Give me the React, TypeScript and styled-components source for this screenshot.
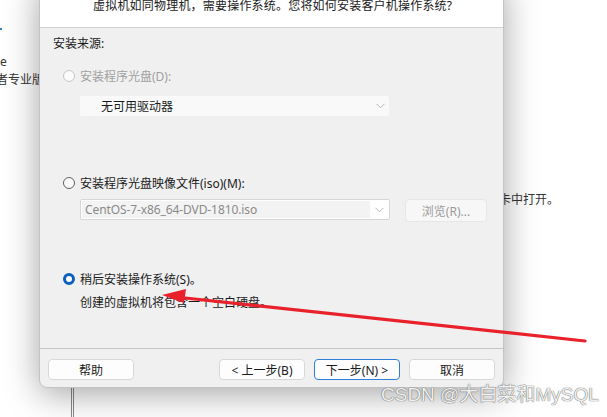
import * as React from 'react';
import styled, { createGlobalStyle } from 'styled-components';

const GlobalStyle = createGlobalStyle`
  html, body {
    margin: 0;
    padding: 0;
    background: #ffffff;
    overflow: hidden;
  }
  body {
    font-family: "Noto Sans", "Noto Sans CJK SC", sans-serif;
    font-size: 12px;
    color: #1a1a1a;
  }
`;

const Screen = styled.div`
  position: relative;
  width: 607px;
  height: 417px;
  overflow: hidden;
  background: #ffffff;
`;

const BackText = styled.div<{ $top: number; $left: number }>`
  position: absolute;
  top: ${(p) => p.$top}px;
  left: ${(p) => p.$left}px;
  font-size: 12px;
  line-height: 16px;
  color: #333;
  white-space: nowrap;
`;

const BackMark = styled.div`
  position: absolute;
  left: 0;
  top: 28px;
  width: 2px;
  height: 2px;
  background: #3a7bd5;
`;

const BackRail = styled.div`
  position: absolute;
  left: 71px;
  top: 380px;
  width: 1px;
  height: 40px;
  border-left: 1px solid #8a8a8a;
  border-right: 1px solid #8a8a8a;
`;

const Dialog = styled.div`
  position: absolute;
  left: 39px;
  top: -20px;
  width: 463px;
  height: 406px;
  border: 1px solid #c4c4c4;
  border-radius: 0 0 8px 8px;
  background: #f0f0f0;
  box-shadow: 0 6px 34px rgba(0, 0, 0, 0.36);
  display: flex;
  flex-direction: column;
  overflow: hidden;
`;

const Header = styled.div`
  height: 47px;
  background: #ffffff;
  border-bottom: 1px solid #d2d2d2;
  padding-left: 53px;
  box-sizing: border-box;
`;

const Question = styled.div`
  padding-top: 17px;
  font-size: 12px;
  line-height: 16px;
  letter-spacing: 0.2px;
`;

const Body = styled.div`
  flex: 1;
  padding: 8px 13px 0;
  display: flex;
  flex-direction: column;
`;

const SectionLabel = styled.div`
  line-height: 16px;
`;

const RadioRow = styled.label<{ $gap: number; $disabled?: boolean }>`
  margin-top: ${(p) => p.$gap}px;
  margin-left: 10px;
  display: flex;
  align-items: center;
  gap: 5px;
  height: 16px;
  color: ${(p) => (p.$disabled ? '#a0a0a0' : '#1a1a1a')};
`;

const RadioDot = styled.span<{ $state: 'disabled' | 'off' | 'on' }>`
  width: 12px;
  height: 12px;
  border-radius: 50%;
  box-sizing: border-box;
  flex: none;
  background: #fbfbfb;
  border: ${(p) =>
    p.$state === 'on'
      ? '3.5px solid #0a5fbf'
      : p.$state === 'off'
      ? '1px solid #5f5f5f'
      : '1px solid #c6c6c6'};
`;

const Indented = styled.div<{ $gap: number }>`
  margin-top: ${(p) => p.$gap}px;
  margin-left: 27px;
  display: flex;
  align-items: flex-start;
  gap: 15px;
`;

const DriveSelect = styled.div`
  width: 309px;
  height: 20px;
  background: #f9f9f9;
  border-radius: 2px;
  display: flex;
  align-items: center;
  justify-content: space-between;
  padding: 0 4px 0 21px;
  box-sizing: border-box;
`;

const IsoSelect = styled.div`
  width: 310px;
  height: 21px;
  background: #ffffff;
  border: 1px solid #d6d6d6;
  border-radius: 2px;
  display: flex;
  align-items: stretch;
  box-sizing: border-box;
`;

const IsoField = styled.div`
  flex: 1;
  background: #f3f3f3;
  margin: 1px 0 1px 1px;
  padding-left: 3px;
  display: flex;
  align-items: center;
  color: #8a8a8a;
  font-size: 12px;
  letter-spacing: -0.1px;
`;

const Caret = styled.div`
  width: 19px;
  display: flex;
  align-items: center;
  justify-content: center;
`;

const BrowseButton = styled.div`
  width: 82px;
  height: 23px;
  box-sizing: border-box;
  background: #f7f7f7;
  border: 1px solid #e6e6e6;
  border-radius: 4px;
  color: #9a9a9a;
  display: flex;
  align-items: center;
  justify-content: center;
`;

const Hint = styled.div<{ $gap: number }>`
  margin-top: ${(p) => p.$gap}px;
  margin-left: 27px;
  line-height: 16px;
`;

const Footer = styled.div`
  height: 39px;
  border-top: 1px solid #c6c6c6;
  display: flex;
  align-items: flex-start;
  padding: 10px 8px 0 8px;
  box-sizing: border-box;
`;

const Button = styled.div<{ $primary?: boolean }>`
  width: 86px;
  height: 21px;
  box-sizing: border-box;
  background: #fdfdfd;
  border: 1px solid ${(p) => (p.$primary ? '#2f7ed8' : '#d8d8d8')};
  border-radius: 4px;
  display: flex;
  align-items: center;
  justify-content: center;
  font-size: 12px;
  & + & {
    margin-left: 9px;
  }
`;

const Spacer = styled.div`
  flex: 1;
`;

const Overlay = styled.svg`
  position: absolute;
  left: 0;
  top: 0;
  pointer-events: none;
`;

const Watermark = styled.div`
  position: absolute;
  left: 381px;
  top: 383px;
  font-family: "Liberation Sans", "Noto Sans CJK SC", sans-serif;
  font-size: 19px;
  line-height: 24px;
  color: rgba(255, 255, 255, 0.92);
  text-shadow: 0 0 1px #555, 0 0 1px #777;
  white-space: nowrap;
`;

const Chevron = () => (
  <svg width="9" height="6" viewBox="0 0 9 6">
    <path d="M0.5 0.8 L4.5 4.8 L8.5 0.8" fill="none" stroke="#b5b5b5" strokeWidth="1" />
  </svg>
);

export default function App() {
  return (
    <Screen>
      <GlobalStyle />
      <BackMark />
      <BackText $top={54} $left={0}>e</BackText>
      <BackText $top={72} $left={-4}>者专业版</BackText>
      <BackText $top={192} $left={475}>选项卡中打开。</BackText>
      <BackRail />

      <Dialog>
        <Header>
          <Question>虚拟机如同物理机，需要操作系统。您将如何安装客户机操作系统?</Question>
        </Header>
        <Body>
          <SectionLabel>安装来源:</SectionLabel>

          <RadioRow $gap={16} $disabled>
            <RadioDot $state="disabled" />
            安装程序光盘(D):
          </RadioRow>
          <Indented $gap={12}>
            <DriveSelect>
              无可用驱动器
              <Chevron />
            </DriveSelect>
          </Indented>

          <RadioRow $gap={59}>
            <RadioDot $state="off" />
            安装程序光盘映像文件(iso)(M):
          </RadioRow>
          <Indented $gap={8}>
            <IsoSelect>
              <IsoField>CentOS-7-x86_64-DVD-1810.iso</IsoField>
              <Caret>
                <Chevron />
              </Caret>
            </IsoSelect>
            <BrowseButton>浏览(R)...</BrowseButton>
          </Indented>

          <RadioRow $gap={49}>
            <RadioDot $state="on" />
            稍后安装操作系统(S)。
          </RadioRow>
          <Hint $gap={8}>创建的虚拟机将包含一个空白硬盘。</Hint>
        </Body>
        <Footer>
          <Button>帮助</Button>
          <Spacer />
          <Button>&lt; 上一步(B)</Button>
          <Button $primary>下一步(N) &gt;</Button>
          <Button>取消</Button>
        </Footer>
      </Dialog>

      <Overlay width="607" height="417" viewBox="0 0 607 417">
        <line x1="585" y1="341" x2="176" y2="297" stroke="#e8212b" strokeWidth="3.2" strokeLinecap="round" />
        <polygon points="162,295 186,289 184,303" fill="#e8212b" />
      </Overlay>

      <Watermark>CSDN @大白菜和MySQL</Watermark>
    </Screen>
  );
}
